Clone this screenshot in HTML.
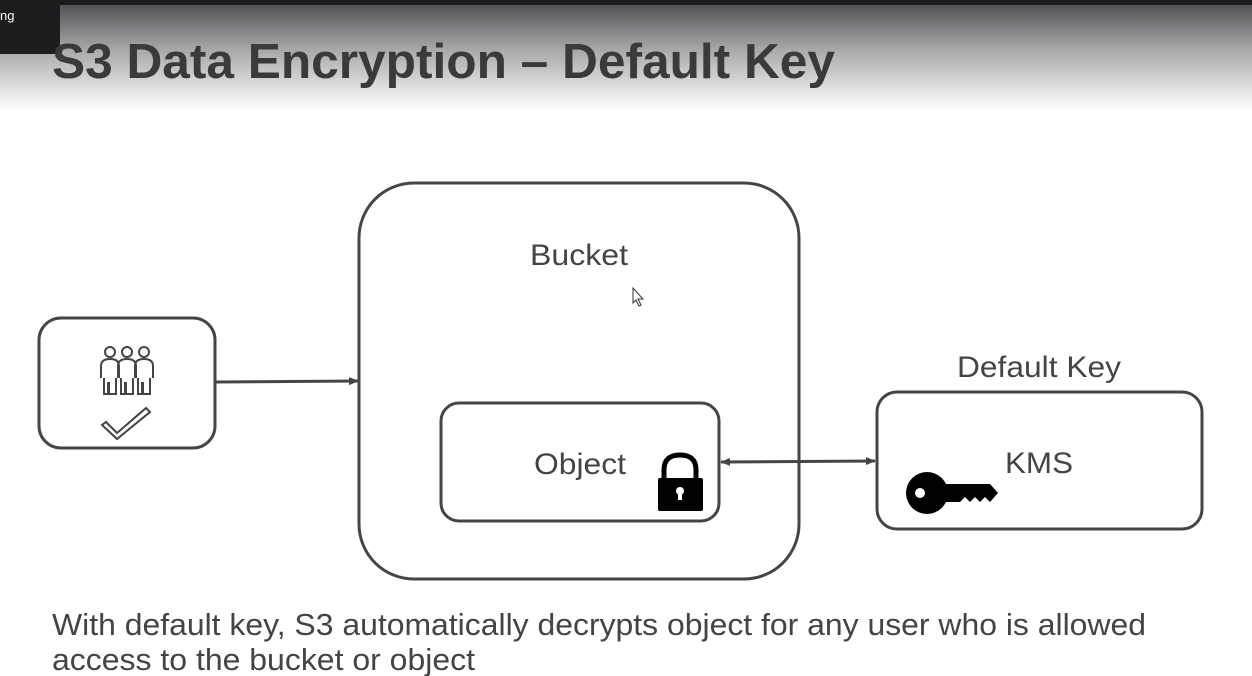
<!DOCTYPE html>
<html><head><style>
body{margin:0;width:1252px;height:676px;overflow:hidden;background:#fff;font-family:"Liberation Sans",sans-serif;}
</style></head><body>
<svg width="1252" height="676" xmlns="http://www.w3.org/2000/svg" style="position:absolute;left:0;top:0">
<defs>
<linearGradient id="g" x1="0" y1="0" x2="0" y2="1">
<stop offset="0" stop-color="#4a4a4e"/><stop offset="0.45" stop-color="#a8a8aa"/><stop offset="1" stop-color="#fff"/>
</linearGradient>
<marker id="ah" markerWidth="10" markerHeight="10" refX="9" refY="5" orient="auto-start-reverse" markerUnits="userSpaceOnUse"><path d="M0,1 L10,5 L0,9 z" fill="#444"/></marker>
</defs>
<rect x="0" y="0" width="1252" height="110" fill="url(#g)"/>
<rect x="0" y="0" width="1252" height="5" fill="#1c1c1e"/>
<rect x="0" y="0" width="60" height="54" fill="#1c1d1f"/>
<text x="0" y="20" font-size="13" fill="#fff">ng</text>
<text x="52" y="78" font-size="49" font-weight="bold" fill="#3a3a3c" textLength="783" lengthAdjust="spacingAndGlyphs">S3 Data Encryption – Default Key</text>
<g fill="none" stroke="#454545" stroke-width="3">
<rect x="39" y="318" width="176" height="130" rx="22"/>
<rect x="359" y="183" width="440" height="396" rx="55"/>
<rect x="441" y="403" width="278" height="118" rx="18"/>
<rect x="877" y="392" width="325" height="137" rx="20"/>
<line x1="216" y1="382" x2="358" y2="381" marker-end="url(#ah)"/>
<line x1="721" y1="462" x2="875" y2="461" marker-start="url(#ah)" marker-end="url(#ah)"/>
</g>
<g fill="#444" font-size="30">
<text x="530" y="265" textLength="98" lengthAdjust="spacingAndGlyphs">Bucket</text>
<text x="534" y="474" textLength="92" lengthAdjust="spacingAndGlyphs">Object</text>
<text x="957" y="377" textLength="164" lengthAdjust="spacingAndGlyphs">Default Key</text>
<text x="1005" y="473" textLength="68" lengthAdjust="spacingAndGlyphs">KMS</text>
<text x="52" y="635" font-size="31" textLength="1094" lengthAdjust="spacingAndGlyphs">With default key, S3 automatically decrypts object for any user who is allowed</text>
<text x="52" y="670" font-size="31" textLength="423" lengthAdjust="spacingAndGlyphs">access to the bucket or object</text>
</g>
<!-- users icon -->
<g fill="none" stroke="#444" stroke-width="2">
<circle cx="110" cy="352" r="5"/><circle cx="127" cy="352" r="5"/><circle cx="144" cy="352" r="5"/>
<path d="M101,378 V366 Q101,359 110,359 Q119,359 119,366 V378 M104,378 V394 H116 V378"/>
<path d="M118,378 V366 Q118,359 127,359 Q136,359 136,366 V378 M121,378 V394 H133 V378"/>
<path d="M135,378 V366 Q135,359 144,359 Q153,359 153,366 V378 M138,378 V394 H150 V378"/>
<path d="M106,422 L117,433 L146,408 L150,412 L117,439 L102,425 Z" stroke-width="2"/>
</g>
<g fill="#444"><rect x="107" y="382" width="3" height="12"/><rect x="124" y="382" width="3" height="12"/><rect x="141" y="382" width="3" height="12"/></g>
<!-- lock -->
<path d="M664,480 V470 Q664,455 680,455 Q696,455 696,470 V480" fill="none" stroke="#000" stroke-width="5"/>
<rect x="658" y="478" width="45" height="33" rx="2" fill="#000"/>
<circle cx="680" cy="491" r="4" fill="#fff"/><rect x="678" y="491" width="4" height="9" fill="#fff"/>
<!-- key -->
<circle cx="927" cy="493" r="21" fill="#000"/>
<circle cx="920" cy="493" r="5" fill="#fff"/>
<path d="M945,484 H990 L998,493 L990,502 L985,497 L980,502 L975,497 L970,502 L965,497 L960,502 H945 Z" fill="#000"/>
<!-- cursor -->
<path d="M633,288 L633,303 L636,300 L639,306 L641,305 L638,299 L643,299 Z" fill="#fff" stroke="#333" stroke-width="1"/>
</svg>
</body></html>
